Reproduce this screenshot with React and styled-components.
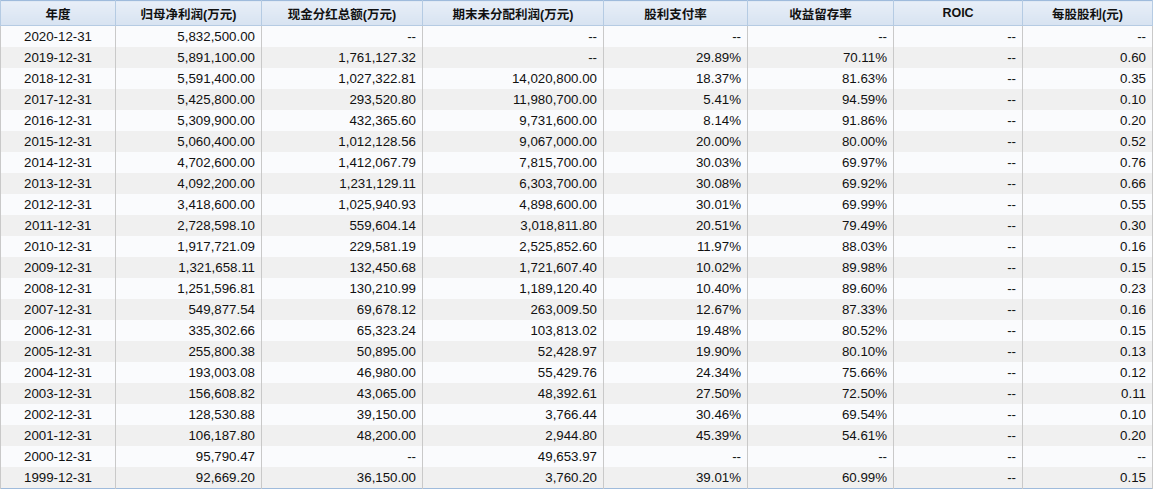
import React from "react";
import styled, { createGlobalStyle } from "styled-components";

const G = createGlobalStyle`
  body { margin: 0; background: #fff; font-family: "Liberation Sans", Arial, "Noto Sans CJK SC", sans-serif; }
`;

const cols = [115, 146, 161, 181, 144, 146, 129, 130];
const heads = ["年度", "归母净利润(万元)", "现金分红总额(万元)", "期末未分配利润(万元)", "股利支付率", "收益留存率", "ROIC", "每股股利(元)"];
const raw = `2020-12-31|5,832,500.00|--|--|--|--|--|--
2019-12-31|5,891,100.00|1,761,127.32|--|29.89%|70.11%|--|0.60
2018-12-31|5,591,400.00|1,027,322.81|14,020,800.00|18.37%|81.63%|--|0.35
2017-12-31|5,425,800.00|293,520.80|11,980,700.00|5.41%|94.59%|--|0.10
2016-12-31|5,309,900.00|432,365.60|9,731,600.00|8.14%|91.86%|--|0.20
2015-12-31|5,060,400.00|1,012,128.56|9,067,000.00|20.00%|80.00%|--|0.52
2014-12-31|4,702,600.00|1,412,067.79|7,815,700.00|30.03%|69.97%|--|0.76
2013-12-31|4,092,200.00|1,231,129.11|6,303,700.00|30.08%|69.92%|--|0.66
2012-12-31|3,418,600.00|1,025,940.93|4,898,600.00|30.01%|69.99%|--|0.55
2011-12-31|2,728,598.10|559,604.14|3,018,811.80|20.51%|79.49%|--|0.30
2010-12-31|1,917,721.09|229,581.19|2,525,852.60|11.97%|88.03%|--|0.16
2009-12-31|1,321,658.11|132,450.68|1,721,607.40|10.02%|89.98%|--|0.15
2008-12-31|1,251,596.81|130,210.99|1,189,120.40|10.40%|89.60%|--|0.23
2007-12-31|549,877.54|69,678.12|263,009.50|12.67%|87.33%|--|0.16
2006-12-31|335,302.66|65,323.24|103,813.02|19.48%|80.52%|--|0.15
2005-12-31|255,800.38|50,895.00|52,428.97|19.90%|80.10%|--|0.13
2004-12-31|193,003.08|46,980.00|55,429.76|24.34%|75.66%|--|0.12
2003-12-31|156,608.82|43,065.00|48,392.61|27.50%|72.50%|--|0.11
2002-12-31|128,530.88|39,150.00|3,766.44|30.46%|69.54%|--|0.10
2001-12-31|106,187.80|48,200.00|2,944.80|45.39%|54.61%|--|0.20
2000-12-31|95,790.47|--|49,653.97|--|--|--|--
1999-12-31|92,669.20|36,150.00|3,760.20|39.01%|60.99%|--|0.15`;
const rows = raw.split("\n").map((l) => l.split("|"));

const Table = styled.table`
  border-collapse: collapse;
  table-layout: fixed;
  width: 1153px;
  border: 1px solid #9fbbdc;
  font-size: 13.3px;
  color: #111;
`;
const Th = styled.th`
  height: 24px;
  padding: 0 4px;
  background: linear-gradient(#e8eff8, #d7e3f1);
  border: 1px solid #b5cbe3;
  border-top: none;
  font-weight: bold;
  font-size: 12.5px;
  text-align: center;
`;
const Tr = styled.tr`
  background: ${(p) => (p.$odd ? "#f0f0f0" : "#fafbfd")};
`;
const Td = styled.td`
  height: 21px;
  padding: 0 6px;
  border-left: 1px solid #c9c9c9;
  border-right: 1px solid #c9c9c9;
  text-align: ${(p) => (p.$c ? "center" : "right")};
  white-space: nowrap;
`;

export default function App() {
  return (
    <>
      <G />
      <Table>
        <colgroup>{cols.map((w, i) => <col key={i} style={{ width: w }} />)}</colgroup>
        <thead><tr>{heads.map((h) => <Th key={h}>{h}</Th>)}</tr></thead>
        <tbody>
          {rows.map((r, i) => (
            <Tr key={i} $odd={i % 2 === 1}>
              {r.map((c, j) => <Td key={j} $c={j === 0}>{c}</Td>)}
            </Tr>
          ))}
        </tbody>
      </Table>
    </>
  );
}
